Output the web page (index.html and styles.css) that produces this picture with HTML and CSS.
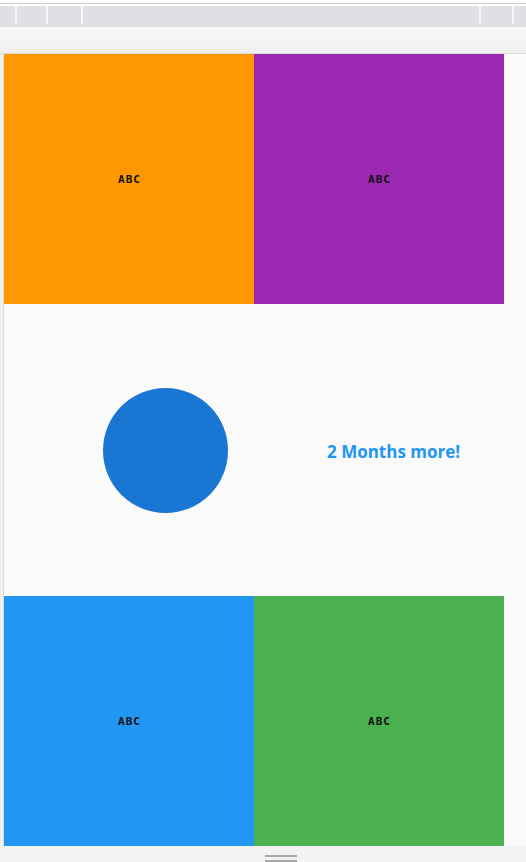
FILE: index.html
```html
<!DOCTYPE html>
<html>
<head>
<meta charset="utf-8">
<link rel="stylesheet" href="styles.css">
</head>
<body>
<div class="chrome">
  <div class="top-gap"></div>
  <div class="tabs">
    <div class="tab t1"></div>
    <div class="tab t2"></div>
    <div class="tab t3"></div>
    <div class="tab t4"></div>
    <div class="tab t5"></div>
    <div class="tab t6"></div>
  </div>
  <div class="toolbar"></div>
</div>
<div class="main">
  <div class="left-strip"></div>
  <div class="content">
    <div class="row">
      <div class="cell orange"><span class="abc">ABC</span></div>
      <div class="cell purple"><span class="abc">ABC</span></div>
    </div>
    <div class="middle">
      <div class="circle"></div>
      <div class="months">2 Months more!</div>
    </div>
    <div class="row">
      <div class="cell blue"><span class="abc">ABC</span></div>
      <div class="cell green"><span class="abc">ABC</span></div>
    </div>
  </div>
  <div class="right-strip"></div>
</div>
<div class="bottom">
  <div class="handle"></div>
</div>
</body>
</html>
```
FILE: styles.css
```css
html, body {
  margin: 0;
  padding: 0;
  background: #fafafa;
  overflow: hidden;
}
.chrome {
  display: flex;
  flex-direction: column;
}
.top-gap {
  border-top: 3px solid #ffffff;
  border-bottom: 2px solid #ffffff;
  background: #cfcfcf;
  height: 1px;
}
.tabs {
  display: flex;
  height: 21px;
  background: #dfe0e4;
}
.tab {
  height: 18px;
  border-right: 2px solid #f7f7f8;
}
.t1 { width: 15px; }
.t2 { width: 29px; }
.t3 { width: 33px; }
.t4 { width: 396px; }
.t5 { width: 31px; }
.t6 { flex: 1; border-right: none; }
.toolbar {
  height: 26px;
  background: linear-gradient(#f7f8f7, #eeefee);
  border-bottom: 1px solid #dcdcdc;
}
.main {
  display: flex;
  height: 792px;
}
.left-strip {
  width: 3px;
  background: #f1f1f1;
  border-right: 1px solid #dddddd;
}
.content {
  width: 500px;
  display: flex;
  flex-direction: column;
}
.right-strip {
  flex: 1;
  background: #fafafa;
}
.row {
  display: flex;
  height: 250px;
}
.cell {
  width: 250px;
  height: 250px;
  display: flex;
  align-items: center;
  justify-content: center;
}
.orange { background: #ff9800; }
.purple { background: #9c27b0; }
.blue { background: #2196f3; }
.green { background: #4caf50; }
.abc {
  font-family: "DejaVu Sans Mono", monospace;
  font-weight: bold;
  font-size: 11px;
  letter-spacing: 1px;
  color: #111111;
  margin-left: 1px;
}
.middle {
  height: 292px;
  width: 522px;
  display: flex;
  align-items: center;
  padding-left: 99px;
  box-sizing: border-box;
  background: #fafafa;
}
.circle {
  width: 125px;
  height: 125px;
  border-radius: 50%;
  background: #1976d2;
  flex: none;
}
.months {
  margin-left: 99px;
  margin-top: 2px;
  font-family: "Open Sans", sans-serif;
  font-weight: bold;
  font-size: 17px;
  color: #2196f3;
  white-space: nowrap;
}
.bottom {
  height: 16px;
  background: #f1f3f4;
  display: flex;
  padding-top: 9px;
  padding-left: 265px;
  box-sizing: border-box;
}
.handle {
  width: 32px;
  height: 3px;
  border-top: 2px solid #a8a8a8;
  border-bottom: 2px solid #a8a8a8;
}
```
